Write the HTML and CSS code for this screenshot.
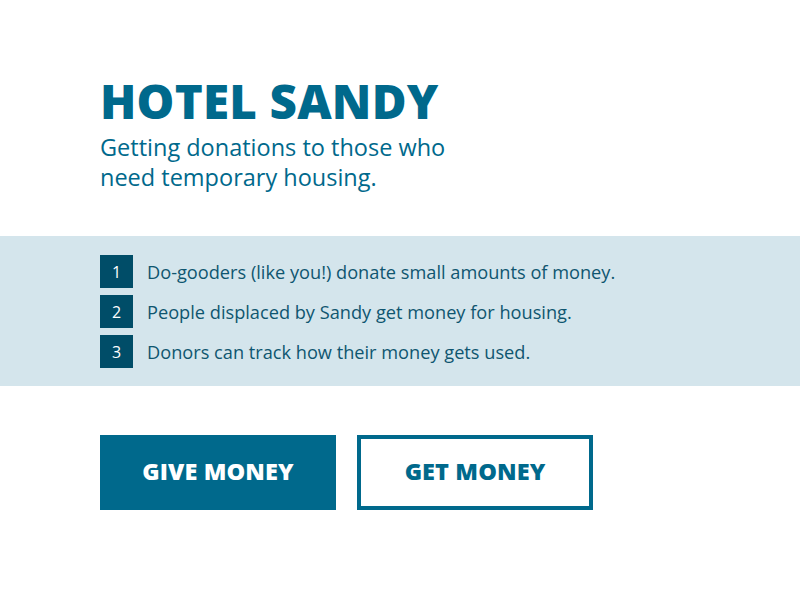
FILE: index.html
```html
<!DOCTYPE html>
<html>
<head>
<meta charset="utf-8">
<link rel="stylesheet" href="styles.css">
</head>
<body>
<header class="hero">
  <h1 class="title">HOTEL SANDY</h1>
  <p class="tagline">Getting donations to those who<br>need temporary housing.</p>
</header>
<section class="band">
  <ol class="steps">
    <li class="step"><span class="num">1</span><span class="txt">Do-gooders (like you!) donate small amounts of money.</span></li>
    <li class="step"><span class="num">2</span><span class="txt">People displaced by Sandy get money for housing.</span></li>
    <li class="step"><span class="num">3</span><span class="txt">Donors can track how their money gets used.</span></li>
  </ol>
</section>
<div class="actions">
  <a class="btn btn-solid">GIVE MONEY</a>
  <a class="btn btn-outline">GET MONEY</a>
</div>
</body>
</html>
```

FILE: styles.css
```css
html, body {
  margin: 0;
  padding: 0;
  background: #ffffff;
  font-family: "Open Sans", "DejaVu Sans", sans-serif;
}
.hero {
  padding: 73px 100px 0;
  height: 236px;
  box-sizing: border-box;
}
.title {
  margin: 0;
  font-size: 47.5px;
  font-weight: 800;
  line-height: 56px;
  color: #00698c;
  letter-spacing: 0.2px;
}
.tagline {
  margin: 3px 0 0;
  font-size: 23.5px;
  line-height: 30px;
  color: #00698c;
}
.band {
  background: #d4e5ec;
  height: 150px;
  padding: 19px 100px 0;
  box-sizing: border-box;
}
.steps {
  list-style: none;
  margin: 0;
  padding: 0;
  display: flex;
  flex-direction: column;
  gap: 7px;
}
.step {
  display: flex;
  align-items: center;
  height: 33px;
}
.num {
  width: 33px;
  height: 33px;
  background: #004d68;
  color: #ffffff;
  font-size: 16px;
  display: flex;
  align-items: center;
  justify-content: center;
}
.txt {
  margin-left: 14px;
  font-size: 18.2px;
  color: #0f5670;
}
.actions {
  display: flex;
  gap: 21px;
  padding: 49px 100px 0;
}
.btn {
  width: 236px;
  height: 75px;
  padding-bottom: 3px;
  box-sizing: border-box;
  display: flex;
  align-items: center;
  justify-content: center;
  font-size: 23.5px;
  font-weight: 800;
  letter-spacing: 0.1px;
}
.btn-solid {
  background: #00698c;
  color: #ffffff;
}
.btn-outline {
  border: 4px solid #00698c;
  color: #00698c;
  background: #ffffff;
}
```
